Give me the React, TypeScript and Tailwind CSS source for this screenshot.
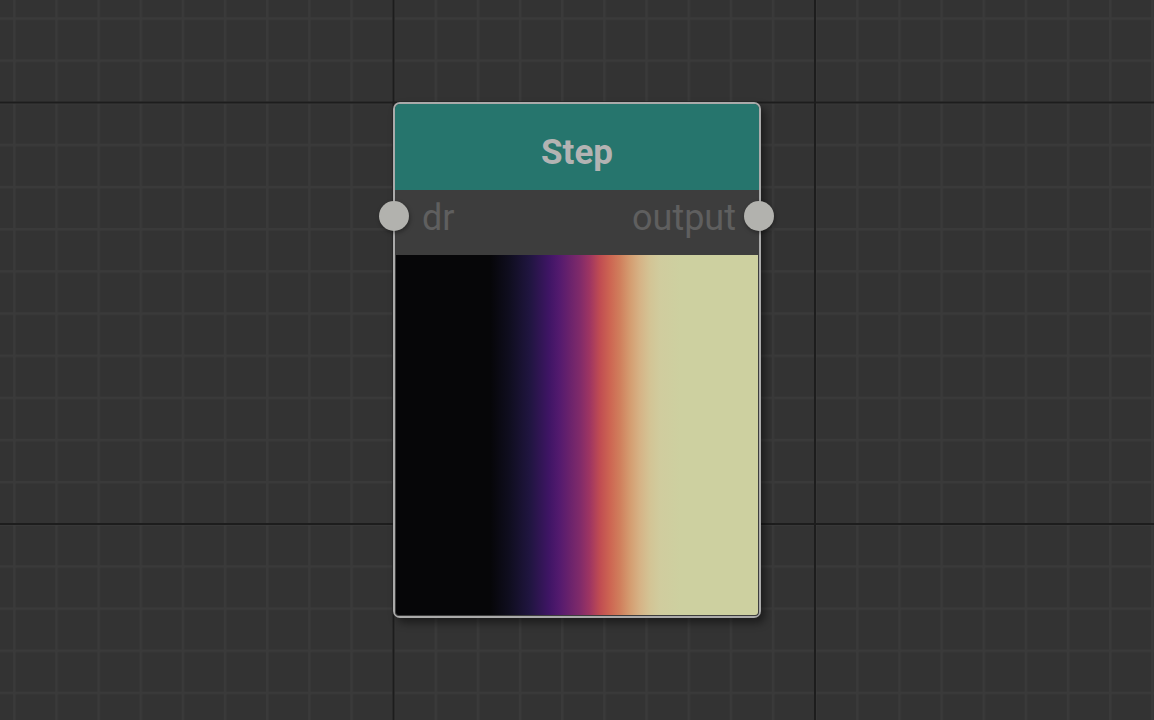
import React from "react"

function CanvasGrid() {
  return (
    <svg className="absolute inset-0 h-full w-full" xmlns="http://www.w3.org/2000/svg">
      <defs>
        <pattern id="minor" x="13.1" y="17.3" width="42.15" height="42.15" patternUnits="userSpaceOnUse">
          <rect x="0" y="0" width="2.5" height="42.15" fill="#3a3a3a" />
          <rect x="0" y="0" width="42.15" height="2.5" fill="#3a3a3a" />
        </pattern>
        <pattern id="major" x="392.5" y="101.5" width="421.5" height="421.5" patternUnits="userSpaceOnUse">
          <rect x="0" y="0" width="2" height="421.5" fill="#1d1d1d" />
          <rect x="0" y="0" width="421.5" height="2" fill="#1d1d1d" />
        </pattern>
      </defs>
      <rect width="100%" height="100%" fill="#333333" />
      <rect width="100%" height="100%" fill="url(#minor)" />
      <rect width="100%" height="100%" fill="url(#major)" />
    </svg>
  )
}

function Port({ side }: { side: "left" | "right" }) {
  return (
    <div
      className={
        side === "left"
          ? "absolute -left-[16px] top-[11px] h-[30px] w-[30px] rounded-full bg-[#b2b2ae] shadow-[1px_2px_4px_rgba(0,0,0,0.35)]"
          : "absolute -right-[15px] top-[11px] h-[30px] w-[30px] rounded-full bg-[#b2b2ae] shadow-[1px_2px_4px_rgba(0,0,0,0.35)]"
      }
    />
  )
}

export default function App() {
  return (
    <div className="relative h-[720px] w-full overflow-hidden font-['Roboto',sans-serif]">
      <CanvasGrid />

      {/* node */}
      <div className="absolute left-[393px] top-[102px] flex h-[516px] w-[368px] flex-col rounded-[7px] border-[2.5px] border-[#aaaaaa] bg-[#3d3d3d] shadow-[4px_5px_8px_rgba(0,0,0,0.45)]">
        <div className="flex h-[86px] items-center justify-center rounded-t-[5px] bg-[#26756d] pt-[13px] text-[35px] font-bold text-[#b3b3b3]">
          Step
        </div>
        <div className="relative flex h-[65px] items-center justify-between bg-[#3d3d3d] pb-[10px] pl-[27px] pr-[23px] text-[36px] leading-none text-[#5f5f5f]">
          <Port side="left" />
          <span>dr</span>
          <span>output</span>
          <Port side="right" />
        </div>
        <div className="flex-1 rounded-b-[4px] border-x border-b border-[#3d3d3d] bg-[linear-gradient(to_right,#060608_0%,#060608_26%,#100e20_31.5%,#201540_37%,#3f1565_42.3%,#531a6e_45.1%,#7f2a6a_50.7%,#9e3562_53.5%,#c04c52_56.3%,#cd6552_59.1%,#d07e5c_61.8%,#d49c70_64.6%,#d6b386_67.4%,#d3c495_70.2%,#d0cc9e_73%,#cdd0a0_78.6%,#cdd0a0_100%)]" />
      </div>
    </div>
  )
}
